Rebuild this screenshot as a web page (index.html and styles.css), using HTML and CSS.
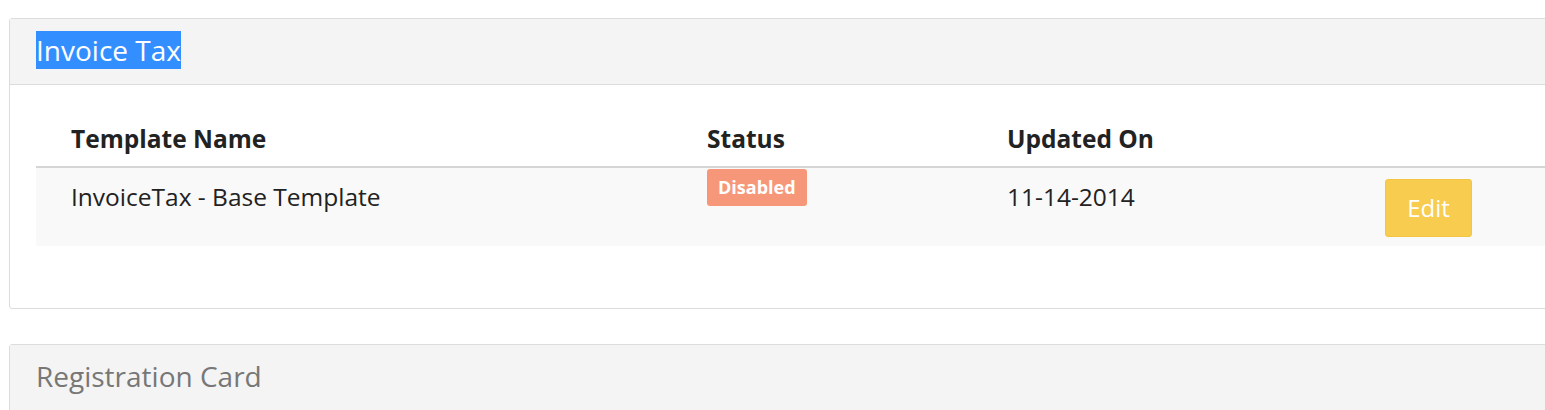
FILE: index.html
```html
<!DOCTYPE html>
<html>
<head>
<meta charset="utf-8">
<link rel="stylesheet" href="styles.css">
</head>
<body>
<div class="page">
  <section class="panel">
    <div class="panel-heading"><span class="selected">Invoice Tax</span></div>
    <div class="panel-body">
      <table class="tpl-table">
        <thead>
          <tr>
            <th class="c-name">Template Name</th>
            <th class="c-status">Status</th>
            <th class="c-date">Updated On</th>
            <th class="c-act"></th>
          </tr>
        </thead>
        <tbody>
          <tr>
            <td class="c-name">InvoiceTax - Base Template</td>
            <td class="c-status status-cell"><span class="badge">Disabled</span></td>
            <td class="c-date">11-14-2014</td>
            <td class="c-act act-cell"><button class="btn-edit">Edit</button></td>
          </tr>
        </tbody>
      </table>
    </div>
  </section>
  <section class="panel">
    <div class="panel-heading muted">Registration Card</div>
    <div class="panel-body"></div>
  </section>
</div>
</body>
</html>
```
FILE: styles.css
```css
html, body {
  margin: 0;
  padding: 0;
  overflow: hidden;
  background: #fff;
}
body {
  font-family: "Open Sans", "Liberation Sans", sans-serif;
  color: #222;
}
.page {
  padding: 18px 0 0 9px;
  width: 1700px;
}
.panel {
  border: 1px solid #dcdcdc;
  border-radius: 3px;
  margin-bottom: 35px;
  background: #fff;
}
.panel-heading {
  background: #f4f4f4;
  border-bottom: 1px solid #dcdcdc;
  padding: 13px 26px 15px;
  font-size: 28px;
  line-height: 37px;
  color: #222;
}
.panel-heading.muted {
  color: #777;
}
.selected {
  background: #338fff;
  color: #fff;
}
.panel-body {
  padding: 26px 26px 62px;
}
.tpl-table {
  border-collapse: collapse;
  width: 1650px;
  font-size: 24.5px;
}
.tpl-table th {
  text-align: left;
  font-weight: 700;
  height: 55px;
  padding: 0 35px;
  vertical-align: middle;
  border-bottom: 2px solid #d5d5d5;
  color: #222;
}
.tpl-table td {
  background: #f9f9f9;
  padding: 12px 35px 0;
  height: 66px;
  vertical-align: top;
  line-height: 34px;
  color: #222;
}
.c-name { width: 566px; }
.c-status { width: 230px; }
.c-date { width: 308px; }
.tpl-table td.status-cell {
  padding-top: 1px;
  line-height: 0;
}
.tpl-table td.act-cell {
  padding-top: 11px;
  line-height: 0;
}
.badge {
  display: inline-block;
  background: #f7977a;
  color: #fff;
  font-weight: 700;
  font-size: 18px;
  line-height: 37px;
  padding: 0 11px;
  border-radius: 3px;
}
.btn-edit {
  font-family: "Open Sans", "Liberation Sans", sans-serif;
  background: #f7cc4f;
  color: #fff;
  border: 1px solid #f2c643;
  border-radius: 3px;
  font-size: 24px;
  line-height: 34px;
  width: 87px;
  height: 58px;
  padding: 0;
}
```
